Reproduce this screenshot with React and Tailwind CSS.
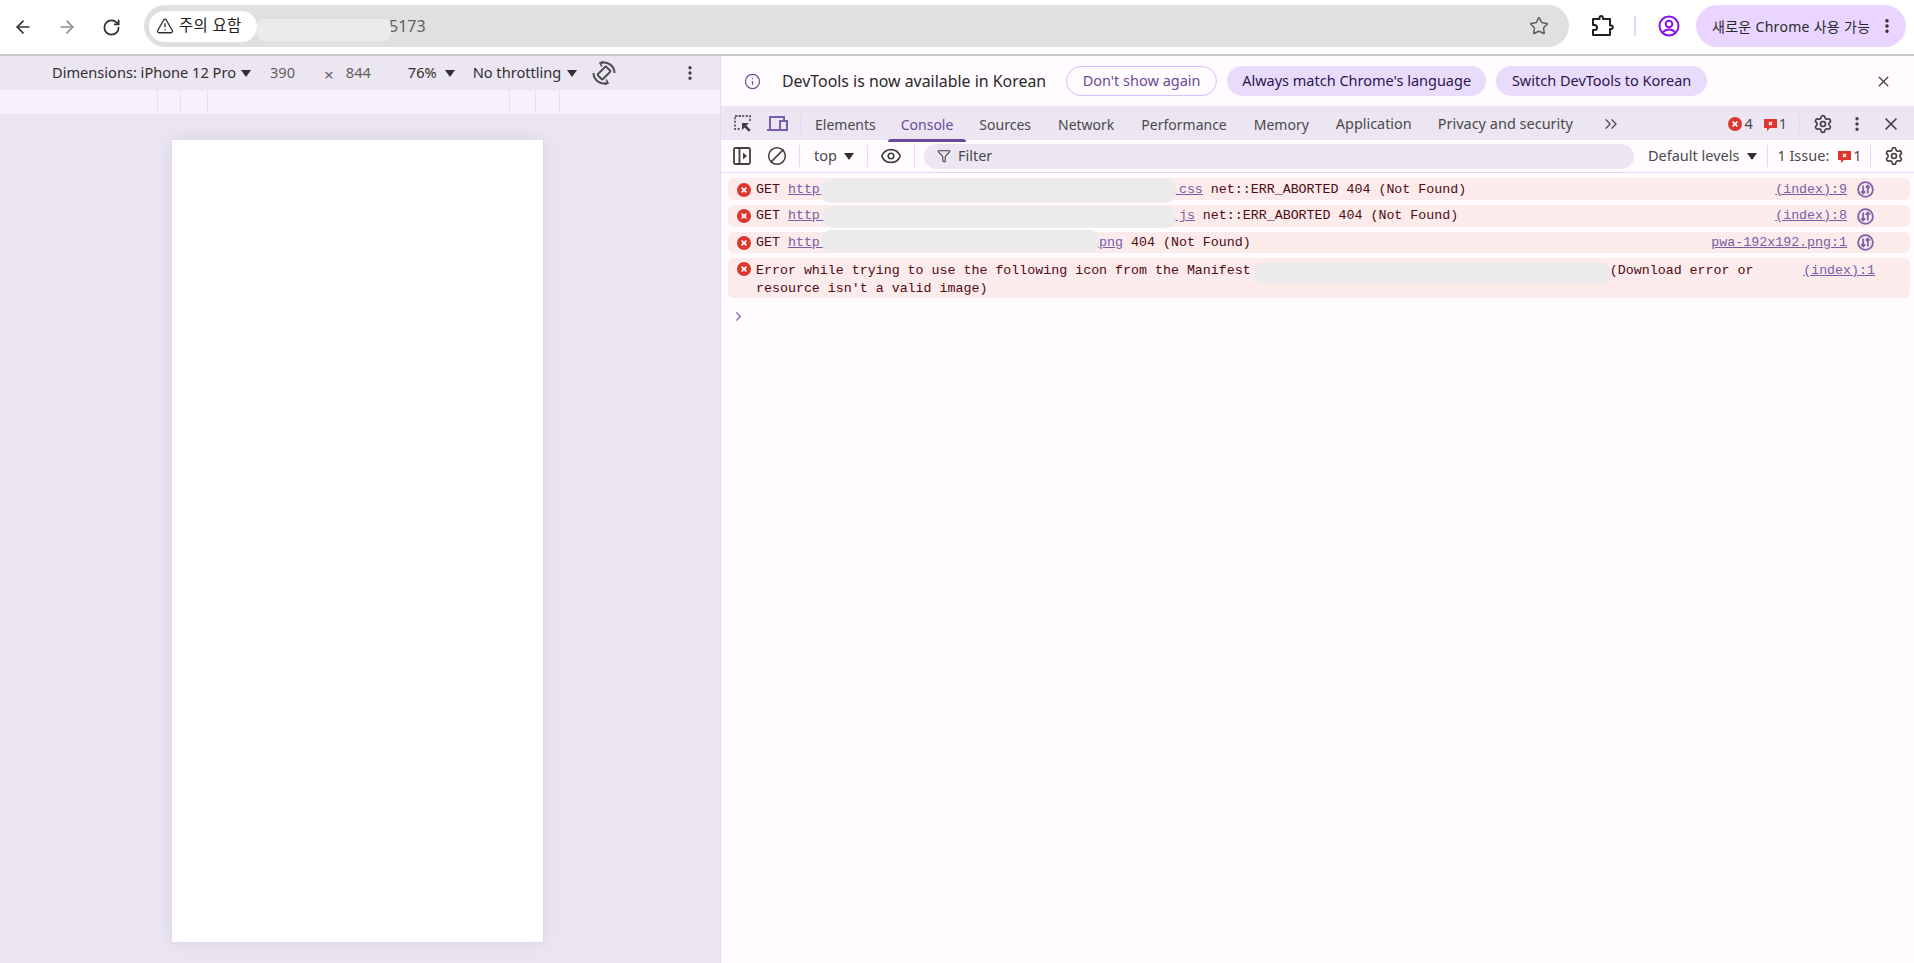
import React from 'react'
import { ArrowLeft, ArrowRight, RotateCw, Star, TriangleAlert, X, Info, ChevronsRight, ChevronRight, EllipsisVertical, Settings, Eye, Funnel, Ban } from 'lucide-react'

const UI = { fontFamily: '"Noto Sans", "Noto Sans CJK KR", sans-serif' }

function Caret({ className = '' }) {
  return (
    <svg width="10" height="7" viewBox="0 0 10 7" className={`shrink-0 ${className}`}>
      <path d="M0 0h10L5 7z" fill="#303030" />
    </svg>
  )
}

function ErrorDot({ size = 14 }) {
  return (
    <svg width={size} height={size} viewBox="0 0 14 14" className="shrink-0">
      <circle cx="7" cy="7" r="7" fill="#dc362e" />
      <path d="M4.6 4.6l4.8 4.8M9.4 4.6l-4.8 4.8" stroke="#fff" strokeWidth="1.6" />
    </svg>
  )
}

function IssueFlag() {
  return (
    <svg width="13" height="13" viewBox="0 0 13 13" className="shrink-0">
      <path d="M0 1h13v9H6l-3 3v-3H0z" fill="#dc362e" />
      <path d="M5 4l3 3M8 4l-3 3" stroke="#fff" strokeWidth="1.3" />
    </svg>
  )
}

function NetworkIcon() {
  return (
    <svg width="17" height="17" viewBox="0 0 17 17" className="shrink-0" fill="none" stroke="#7f62ab" strokeWidth="1.8">
      <circle cx="8.5" cy="8.5" r="7.4" />
      <path d="M6.2 4.5v8M4.2 10.3l2 2.2 2-2.2M10.8 12.5v-8M8.8 6.7l2-2.2 2 2.2" />
    </svg>
  )
}

function Divider({ className = '' }) {
  return <div className={`w-px h-[22px] bg-[#e6d8fb] shrink-0 ${className}`} />
}

const tabs = [
  ['Elements', 'ml-[14px]'],
  ['Console', 'ml-[25px]'],
  ['Sources', 'ml-[26px]'],
  ['Network', 'ml-[27px]'],
  ['Performance', 'ml-[27px]'],
  ['Memory', 'ml-[27px]'],
  ['Application', 'ml-[27px] text-[14.4px]'],
  ['Privacy and security', 'ml-[26px] text-[14.5px]'],
]

function TopBar() {
  return (
    <div className="h-[56px] shrink-0 bg-white border-b-2 border-[#c9c9c9] flex items-center text-[#303030]">
      <ArrowLeft size={20} strokeWidth={2} className="ml-[13px] shrink-0" />
      <ArrowRight size={20} strokeWidth={2} className="ml-[24px] shrink-0 text-[#8f8f8f]" />
      <RotateCw size={19} strokeWidth={2.2} className="ml-[25px] shrink-0" />
      <div className="ml-[23px] w-[1425px] shrink-0 h-[42px] mt-[-2px] rounded-full bg-[#e0e0e0] flex items-center pl-[5px] relative">
        <div className="h-[31px] w-[108px] rounded-full bg-white flex items-center pl-[7px] gap-[5px] text-[15.5px] tracking-[0.3px]" style={UI}>
          <TriangleAlert size={18} strokeWidth={1.8} className="shrink-0" />
          <span className="text-[#202020] whitespace-nowrap">주의 요함</span>
        </div>
        <span className="ml-[132px] text-[16px] text-[#5f5f5f]" style={UI}>5173</span>
        <div className="absolute left-[113px] top-[14px] w-[134px] h-[22px] rounded-lg bg-[#ebebeb]" />
        <Star size={20} strokeWidth={1.8} className="absolute right-[20px] top-[11px] text-[#5f5f5f]" />
      </div>
      <svg width="24" height="24" viewBox="0 0 24 24" fill="none" stroke="#202020" strokeWidth="2" strokeLinejoin="round" className="ml-[21px] mt-[-2px] shrink-0">
        <path d="M3 5h6.500V3.500a1.800 1.800 0 0 1 3.500 0V5H20v6.500h1.500a1.800 1.800 0 0 1 0 3.500H20V21H3v-5h1.500a2.500 2.500 0 0 0 0-5H3z" />
      </svg>
      <div className="ml-[20px] mt-[-2px] w-[2px] h-[20px] bg-[#e6d8fb] shrink-0" />
      <svg width="22" height="22" viewBox="0 0 22 22" fill="none" stroke="#8a10e8" strokeWidth="2" className="ml-[22px] mt-[-2px] shrink-0">
        <circle cx="11" cy="11" r="9.5" />
        <circle cx="11" cy="9" r="3.3" />
        <path d="M4.8 17.5c1.6-2.2 3.6-3 6.2-3s4.6.8 6.2 3" />
      </svg>
      <div className="ml-[16px] mt-[-2px] w-[210px] shrink-0 h-[42px] rounded-full bg-[#e9d5ff] flex items-center pl-[16px] text-[14px] tracking-[0.3px] text-[#2a2a2a] whitespace-nowrap" style={UI}>
        <span>새로운 Chrome 사용 가능</span>
        <EllipsisVertical size={18} strokeWidth={2.6} className="ml-auto mr-[10px]" />
      </div>
    </div>
  )
}

function DevicePane() {
  return (
    <div className="w-[720px] shrink-0 flex flex-col bg-[#ebe6f2]" style={UI}>
      <div className="h-[34px] shrink-0 flex items-center text-[14.6px] text-[#303030] whitespace-nowrap">
        <span className="ml-[52px]">Dimensions: iPhone 12 Pro</span>
        <Caret className="ml-[5px]" />
        <span className="ml-[19px] text-[#5f5f5f]">390</span>
        <span className="ml-[29px] mt-[3px] text-[17px] leading-none text-[#5f5f5f]">×</span>
        <span className="ml-[12px] text-[#5f5f5f]">844</span>
        <span className="ml-[37px]">76%</span>
        <Caret className="ml-[8px]" />
        <span className="ml-[18px]">No throttling</span>
        <Caret className="ml-[6px]" />
        <svg width="24" height="24" viewBox="0 0 24 24" fill="none" stroke="#505050" strokeWidth="2" className="ml-[15px] shrink-0">
          <rect x="8.500" y="6" width="7" height="12" rx="1" transform="rotate(45 12 12)" />
          <path d="M9 2a10.500 10.500 0 0 1 13.500 10M15 22a10.500 10.500 0 0 1-13.500-10" />
          <path d="M11.500 .5L8 2l1.800 3.500M12.500 23.500L16 22l-1.800-3.500" strokeWidth="1.6" />
        </svg>
        <EllipsisVertical size={18} strokeWidth={2.4} className="ml-[65px] text-[#404040] shrink-0" />
      </div>
      <div className="h-[25px] shrink-0 bg-[#f6f1fa] border-b border-[#eadcfd] flex">
        <div className="ml-[157px] w-[24px] border-x border-[#eadcfd] h-[23px]" />
        <div className="w-[27px] border-r border-[#eadcfd] h-[23px]" />
        <div className="ml-[301px] w-[27px] border-x border-[#eadcfd] h-[23px]" />
        <div className="w-[24px] border-r border-[#eadcfd] h-[23px]" />
      </div>
      <div className="flex-1 pt-[24px] pl-[171px]">
        <div className="w-[373px] h-[804px] bg-white border border-[#e0dbe6] shadow-[0_0_20px_rgba(120,100,150,0.12)]" />
      </div>
    </div>
  )
}

function InfoBar() {
  return (
    <div className="h-[50px] shrink-0 flex items-center text-[14.5px] whitespace-nowrap" style={UI}>
      <Info size={17} strokeWidth={1.8} className="ml-[23px] text-[#6f4f9f] shrink-0" />
      <span className="ml-[21px] mt-[2px] text-[#2a2a2a] text-[15.9px]">DevTools is now available in Korean</span>
      <button className="ml-[20px] w-[151px] shrink-0 h-[30px] rounded-full border border-[#d8bdf8] text-[#6a4a96]">Don't show again</button>
      <button className="ml-[10px] w-[259px] shrink-0 h-[30px] rounded-full bg-[#e9dcfb] text-[#2c1650]">Always match Chrome's language</button>
      <button className="ml-[10px] w-[211px] shrink-0 h-[30px] rounded-full bg-[#e9dcfb] text-[#2c1650]">Switch DevTools to Korean</button>
      <X size={17} strokeWidth={1.8} className="ml-[168px] text-[#404040] shrink-0" />
    </div>
  )
}

function TabBar() {
  return (
    <div className="h-[34px] shrink-0 bg-[#ebe6f2] flex items-center pt-[2px] text-[14px] text-[#4a4a4a] whitespace-nowrap" style={UI}>
      <svg width="20" height="20" viewBox="0 0 20 20" fill="none" className="ml-[12px] shrink-0">
        <path d="M8 2H2v13h5" stroke="#5a5a5a" strokeWidth="1.8" strokeDasharray="2 1.6" />
        <path d="M2 2h15v5" stroke="#5a5a5a" strokeWidth="1.8" strokeDasharray="2 1.6" />
        <path d="M9 9h7l-2.600 2.600 4.300 4.300-1.800 1.800-4.300-4.300L9 16z" fill="#404040" />
      </svg>
      <svg width="22" height="18" viewBox="0 0 22 18" fill="none" stroke="#7a5cb0" strokeWidth="2" className="ml-[13px] shrink-0">
        <path d="M1 15h12M4 15V2h14v3" />
        <rect x="14" y="6" width="7" height="9" />
      </svg>
      <Divider className="ml-[12px]" />
      {tabs.map(([name, gap]) => (
        <div key={name} className={`relative ${gap} ${name === 'Console' ? 'text-[#6b4a9e]' : ''}`}>
          {name}
          {name === 'Console' && <div className="absolute left-[-13px] right-[-13px] bottom-[-7px] h-[3px] rounded-t bg-[#6b4a9e]" />}
        </div>
      ))}
      <ChevronsRight size={20} strokeWidth={1.6} className="ml-[28px] text-[#505050] shrink-0" />
      <div className="ml-auto flex items-center text-[14.5px]">
        <ErrorDot />
        <span className="ml-[2px]">4</span>
        <span className="ml-[11px]"><IssueFlag /></span>
        <span className="ml-[2px]">1</span>
        <Divider className="ml-[12px]" />
        <Settings size={20} strokeWidth={2} className="ml-[13px] text-[#404040]" />
        <EllipsisVertical size={18} strokeWidth={2.4} className="ml-[15px] text-[#404040]" />
        <X size={20} strokeWidth={2} className="ml-[15px] mr-[13px] text-[#404040]" />
      </div>
    </div>
  )
}

function ConsoleBar() {
  return (
    <div className="h-[33px] shrink-0 border-b border-[#e6d8fb] flex items-center text-[14.5px] text-[#4a4a4a] whitespace-nowrap" style={UI}>
      <svg width="18" height="18" viewBox="0 0 18 18" fill="none" stroke="#404040" strokeWidth="1.8" className="ml-[12px] shrink-0">
        <rect x="1" y="1" width="16" height="16" rx="1.500" />
        <path d="M6.500 1v16" />
        <path d="M10 5.500l4 3.500-4 3.500z" fill="#404040" stroke="none" />
      </svg>
      <Ban size={20} strokeWidth={1.8} className="ml-[16px] shrink-0 text-[#404040] -scale-x-100" />
      <Divider className="ml-[12px]" />
      <span className="ml-[14px]">top</span>
      <Caret className="ml-[7px]" />
      <Divider className="ml-[13px]" />
      <Eye size={22} strokeWidth={1.8} className="ml-[12px] text-[#404040] shrink-0" />
      <Divider className="ml-[12px]" />
      <div className="ml-[9px] w-[710px] shrink-0 h-[25px] rounded-full bg-[#ebe6f2] flex items-center pl-[13px]">
        <Funnel size={14} strokeWidth={1.8} className="text-[#404040]" />
        <span className="ml-[7px]">Filter</span>
      </div>
      <span className="ml-[14px]">Default levels</span>
      <Caret className="ml-[8px]" />
      <Divider className="ml-[10px]" />
      <span className="ml-[9px]">1 Issue:</span>
      <span className="ml-[9px]"><IssueFlag /></span>
      <span className="ml-[2px]">1</span>
      <Divider className="ml-[8px]" />
      <Settings size={20} strokeWidth={2} className="ml-[13px] text-[#404040] shrink-0" />
    </div>
  )
}

function SourceLink({ label, net = true, className = '' }) {
  return (
    <>
      <span className={`ml-auto underline text-[#7a5ca8] ${net ? '' : 'mr-[35px]'} ${className}`}>{label}</span>
      {net && <span className="ml-[10px] mr-[36px]"><NetworkIcon /></span>}
    </>
  )
}

function Blob({ className }) {
  return <span className={`absolute rounded-[10px] bg-[#ebebeb] ${className}`} />
}

function LogRow({ children, className = '' }) {
  return (
    <div className={`relative ml-[7px] mr-[4px] rounded-md bg-[#fbebea] flex items-center pl-[9px] ${className}`}>
      <ErrorDot />
      {children}
    </div>
  )
}

function ConsoleLog() {
  return (
    <div className="pt-[5px] flex flex-col text-[13.3px] leading-[18px] text-[#4f0a12] whitespace-pre" style={{ fontFamily: '"Liberation Mono", monospace' }}>
      <LogRow className="h-[22px] pt-[1px]">
        <span className="ml-[5px]">GET </span>
        <span className="underline text-[#7a5ca8]">{'http' + ' '.repeat(44) + '.css'}</span>
        <span> net::ERR_ABORTED 404 (Not Found)</span>
        <SourceLink label="(index):9" />
        <Blob className="left-[93px] top-[1px] w-[355px] h-[24px]" />
      </LogRow>
      <LogRow className="h-[22px] mt-[5px]">
        <span className="ml-[5px]">GET </span>
        <span className="underline text-[#7a5ca8]">{'http' + ' '.repeat(44) + '.js'}</span>
        <span> net::ERR_ABORTED 404 (Not Found)</span>
        <SourceLink label="(index):8" />
        <Blob className="left-[95px] top-[1px] w-[353px] h-[22px]" />
      </LogRow>
      <LogRow className="h-[21px] mt-[5px]">
        <span className="ml-[5px]">GET </span>
        <span className="underline text-[#7a5ca8]">{'http' + ' '.repeat(34) + '.png'}</span>
        <span> 404 (Not Found)</span>
        <SourceLink label="pwa-192x192.png:1" />
        <Blob className="left-[93px] top-[-2px] w-[279px] h-[22px]" />
      </LogRow>
      <LogRow className="h-[40px] mt-[5px] items-start pt-[4px]">
        <div className="ml-[5px] w-[1010px] whitespace-pre-wrap">
          {'Error while trying to use the following icon from the Manifest' + ' '.repeat(45) + '(Download error or resource isn\'t a valid image)'}
        </div>
        <SourceLink label="(index):1" net={false} />
        <Blob className="left-[526px] top-[5px] w-[357px] h-[21px]" />
      </LogRow>
      <ChevronRight size={15} strokeWidth={1.8} className="ml-[10px] mt-[11px] text-[#7f62ab]" />
    </div>
  )
}

export default function App() {
  return (
    <div className="w-[1914px] h-[963px] overflow-hidden flex flex-col bg-white">
      <TopBar />
      <div className="flex-1 flex min-h-0">
        <DevicePane />
        <div className="flex-1 min-w-0 flex flex-col bg-[#fffbff] border-l border-[#e6d8fb]">
          <InfoBar />
          <TabBar />
          <ConsoleBar />
          <ConsoleLog />
        </div>
      </div>
    </div>
  )
}
